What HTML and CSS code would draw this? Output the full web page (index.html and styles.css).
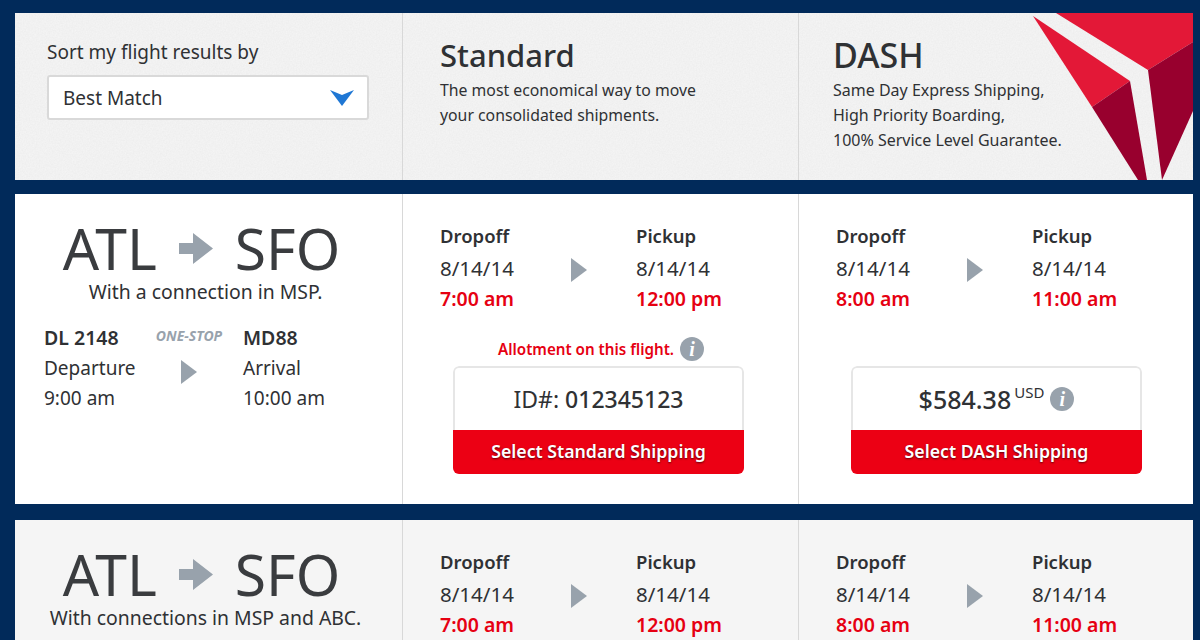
FILE: index.html
```html
<!DOCTYPE html>
<html lang="en">
<head>
    <meta charset="UTF-8">
    <title>Flight results</title>
    <link rel="stylesheet" href="styles.css">
</head>
<body>

    <!-- Sort and product header -->
    <div class="panel header">
        <div class="col sort-col">
            <p class="sort-label">Sort my flight results by</p>
            <div class="select">
                <span>Best Match</span>
                <svg class="select-arrow" width="24" height="18" viewBox="0 0 24 18"><path d="M0 1 L12 6 L24 1 L12 17 Z" fill="#1f77d4"/></svg>
            </div>
        </div>
        <div class="col product-col">
            <h2>Standard</h2>
            <p>The most economical way to move<br>your consolidated shipments.</p>
        </div>
        <div class="col product-col dash-col">
            <h2>DASH</h2>
            <p>Same Day Express Shipping,<br>High Priority Boarding,<br>100% Service Level Guarantee.</p>
        </div>
        <svg class="logo" width="170" height="167" viewBox="0 0 170 167">
            <polygon points="33,0 170,0 170,29 125,57" fill="#e31837"/>
            <polygon points="125,57 170,29 170,98 139,167" fill="#98002e"/>
            <polygon points="10,3 107,68 69,94" fill="#e31837"/>
            <polygon points="69,94 107,68 124,167 115,167" fill="#98002e"/>
        </svg>
    </div>

    <!-- First flight -->
    <div class="panel flight">
        <div class="col route-col">
            <div class="route">
                <span>ATL</span>
                <svg width="34" height="31" viewBox="0 0 34 31"><path d="M0 10 H14 V0 L34 15.5 L14 31 V21 H0 Z" fill="#98a2ac"/></svg>
                <span>SFO</span>
            </div>
            <p class="connection">With a connection in MSP.</p>
            <div class="legs">
                <div class="leg">
                    <strong>DL 2148</strong>
                    <span>Departure</span>
                    <span>9:00 am</span>
                </div>
                <div class="stop">
                    <em>ONE-STOP</em>
                    <svg width="16" height="24" viewBox="0 0 16 24"><path d="M0 0 L16 12 L0 24 Z" fill="#98a2ac"/></svg>
                </div>
                <div class="leg">
                    <strong>MD88</strong>
                    <span>Arrival</span>
                    <span>10:00 am</span>
                </div>
            </div>
        </div>
        <div class="col fare-col">
            <div class="times">
                <div class="time">
                    <strong>Dropoff</strong>
                    <span>8/14/14</span>
                    <b>7:00 am</b>
                </div>
                <svg class="time-arrow" width="16" height="24" viewBox="0 0 16 24"><path d="M0 0 L16 12 L0 24 Z" fill="#98a2ac"/></svg>
                <div class="time">
                    <strong>Pickup</strong>
                    <span>8/14/14</span>
                    <b>12:00 pm</b>
                </div>
            </div>
            <p class="allotment">Allotment on this flight. <i class="info">i</i></p>
            <div class="fare-box">
                <div class="fare-value">ID#: <strong>012345123</strong></div>
                <div class="fare-button">Select Standard Shipping</div>
            </div>
        </div>
        <div class="col fare-col">
            <div class="times">
                <div class="time">
                    <strong>Dropoff</strong>
                    <span>8/14/14</span>
                    <b>8:00 am</b>
                </div>
                <svg class="time-arrow" width="16" height="24" viewBox="0 0 16 24"><path d="M0 0 L16 12 L0 24 Z" fill="#98a2ac"/></svg>
                <div class="time">
                    <strong>Pickup</strong>
                    <span>8/14/14</span>
                    <b>11:00 am</b>
                </div>
            </div>
            <p class="allotment"></p>
            <div class="fare-box second">
                <div class="fare-value price"><strong>$584.38</strong><sup>USD</sup> <i class="info">i</i></div>
                <div class="fare-button">Select DASH Shipping</div>
            </div>
        </div>
    </div>

    <!-- Second flight -->
    <div class="panel flight alt">
        <div class="col route-col">
            <div class="route">
                <span>ATL</span>
                <svg width="34" height="31" viewBox="0 0 34 31"><path d="M0 10 H14 V0 L34 15.5 L14 31 V21 H0 Z" fill="#98a2ac"/></svg>
                <span>SFO</span>
            </div>
            <p class="connection">With connections in MSP and ABC.</p>
        </div>
        <div class="col fare-col">
            <div class="times">
                <div class="time">
                    <strong>Dropoff</strong>
                    <span>8/14/14</span>
                    <b>7:00 am</b>
                </div>
                <svg class="time-arrow" width="16" height="24" viewBox="0 0 16 24"><path d="M0 0 L16 12 L0 24 Z" fill="#98a2ac"/></svg>
                <div class="time">
                    <strong>Pickup</strong>
                    <span>8/14/14</span>
                    <b>12:00 pm</b>
                </div>
            </div>
        </div>
        <div class="col fare-col">
            <div class="times">
                <div class="time">
                    <strong>Dropoff</strong>
                    <span>8/14/14</span>
                    <b>8:00 am</b>
                </div>
                <svg class="time-arrow" width="16" height="24" viewBox="0 0 16 24"><path d="M0 0 L16 12 L0 24 Z" fill="#98a2ac"/></svg>
                <div class="time">
                    <strong>Pickup</strong>
                    <span>8/14/14</span>
                    <b>11:00 am</b>
                </div>
            </div>
        </div>
    </div>

</body>
</html>
```

FILE: styles.css
```css
* {
    margin: 0;
    padding: 0;
    box-sizing: border-box;
}

html, body {
    height: 640px;
    overflow: hidden;
}

body {
    font-family: "Noto Sans", Lato, sans-serif;
    background-color: #012a5a;
    color: #2f3134;
    padding: 13px 7px 0 15px;
}

/* Panels share the same three columns */
.panel {
    display: grid;
    grid-template-columns: 387px 396px 395px;
    position: relative;
    overflow: hidden;
}

.col {
    border-left: 1px solid #d8d8d8;
}

.col:first-child {
    border-left: none;
}

/* Header, paper texture from an svg noise filter */
.header {
    height: 167px;
    background-color: #f6f6f6;
    background-image: url("data:image/svg+xml,%3Csvg xmlns='http://www.w3.org/2000/svg' width='200' height='200'%3E%3Cfilter id='n'%3E%3CfeTurbulence type='fractalNoise' baseFrequency='0.7' numOctaves='2' stitchTiles='stitch'/%3E%3CfeColorMatrix values='0 0 0 0 0 0 0 0 0 0 0 0 0 0 0 0 0 0 0.04 0'/%3E%3C/filter%3E%3Crect width='200' height='200' filter='url(%23n)'/%3E%3C/svg%3E");
}

.sort-col {
    padding: 26px 0 0 32px;
}

.sort-label {
    font-size: 19px;
    line-height: 26px;
}

.select {
    display: flex;
    justify-content: space-between;
    align-items: center;
    width: 322px;
    height: 45px;
    margin-top: 10px;
    padding: 0 13px 0 14px;
    background-color: #fff;
    border: 2px solid #d9d9d9;
    border-radius: 3px;
    font-size: 19px;
}

.product-col {
    padding: 21px 0 0 37px;
    font-size: 15.8px;
    line-height: 25px;
}

.dash-col {
    padding-left: 34px;
    position: relative;
    font-size: 16px;
}

.product-col h2 {
    font-size: 31px;
    font-weight: 500;
    line-height: 42px;
    margin-bottom: 2px;
}

.dash-col h2 {
    font-size: 34px;
}

.logo {
    position: absolute;
    top: 0;
    right: 0;
}

/* Flight rows */
.flight {
    background-color: #fff;
    margin-top: 14px;
    height: 310px;
}

.flight.alt {
    background-color: #f5f5f5;
    height: 120px;
    margin-top: 16px;
}

.route-col {
    padding: 22px 14px 0 0;
}

.route {
    display: flex;
    justify-content: center;
    align-items: center;
    gap: 22px;
    color: #3a3c3f;
    font-size: 57px;
    line-height: 64px;
}

.connection {
    margin: -1px -8px 0 0;
    text-align: center;
    font-size: 19.4px;
    line-height: 26px;
}

.legs {
    display: flex;
    padding: 18px 0 0 29px;
    font-size: 19px;
    line-height: 30px;
}

.leg {
    display: flex;
    flex-direction: column;
    width: 110px;
}

.leg strong {
    font-size: 19.5px;
    font-weight: 600;
}

.stop {
    display: flex;
    flex-direction: column;
    align-items: center;
    width: 88px;
    margin-left: -9px;
    margin-right: 10px;
}

.stop em {
    color: #98a2ac;
    font-size: 14px;
    font-weight: 700;
    line-height: 24px;
    margin: 1px 0 12px;
}

.fare-col {
    padding: 26px 0 0 37px;
}

.times {
    display: flex;
    align-items: center;
    font-size: 18.5px;
}

.time {
    display: flex;
    flex-direction: column;
    width: 131px;
}

.time + .time-arrow + .time {
    width: 120px;
}

.time strong {
    font-weight: 600;
    line-height: 31px;
}

.time span {
    font-size: 20.5px;
    line-height: 34px;
}

.time b {
    color: #e60012;
    font-size: 19.5px;
    font-weight: 600;
    line-height: 28px;
}

.time-arrow {
    margin-right: 49px;
    margin-top: 6px;
}

.allotment {
    display: flex;
    justify-content: center;
    align-items: center;
    gap: 6px;
    width: 322px;
    height: 26px;
    margin: 23px 0 4px;
    color: #e60012;
    font-size: 15.2px;
    font-weight: 600;
}

.info {
    display: inline-block;
    width: 24px;
    height: 24px;
    border-radius: 50%;
    background-color: #98a2ac;
    color: #fff;
    font-family: "Liberation Serif", serif;
    font-size: 20px;
    font-weight: 700;
    font-style: italic;
    line-height: 24px;
    text-align: center;
}

.fare-box {
    width: 291px;
    margin-left: 13px;
    border-radius: 6px;
    overflow: hidden;
}

.fare-box.second {
    margin-left: 15px;
}

.fare-value {
    display: flex;
    justify-content: center;
    align-items: center;
    gap: 6px;
    height: 64px;
    border: 2px solid #e6e6e6;
    border-bottom: none;
    border-radius: 6px 6px 0 0;
    font-size: 23px;
}

.fare-value strong {
    font-weight: 500;
}

.price strong {
    font-size: 25px;
}

.price sup {
    font-size: 15px;
    align-self: flex-start;
    margin: 14px 0 0 -3px;
}

.fare-button {
    height: 44px;
    background-color: #ec0014;
    color: #fff;
    font-size: 17.7px;
    font-weight: 600;
    line-height: 42px;
    text-align: center;
    text-shadow: 0 1px 2px rgba(0, 0, 0, 0.6);
}
```
